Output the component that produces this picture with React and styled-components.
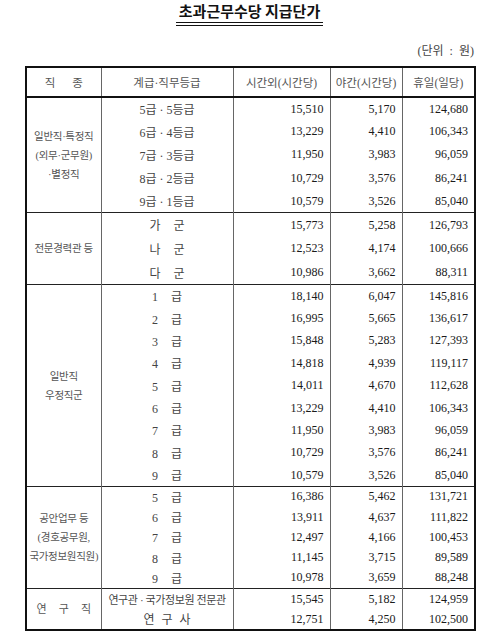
import React from "react";
import styled, { createGlobalStyle } from "styled-components";

const GlobalStyle = createGlobalStyle`
  html, body {
    margin: 0;
    padding: 0;
    background: #ffffff;
  }
  body {
    font-family: "Liberation Serif", "Noto Sans CJK KR", serif;
    color: #222;
  }
`;

const groups = [
  {
    label: ["일반직·특정직", "(외무·군무원)", "·별정직"],
    h: 23.2,
    rows: [
      ["5급 · 5등급", "15,510", "5,170", "124,680"],
      ["6급 · 4등급", "13,229", "4,410", "106,343"],
      ["7급 · 3등급", "11,950", "3,983", "96,059"],
      ["8급 · 2등급", "10,729", "3,576", "86,241"],
      ["9급 · 1등급", "10,579", "3,526", "85,040"],
    ],
  },
  {
    label: ["전문경력관 등"],
    h: 24,
    gap: 10,
    rows: [
      ["가 군", "15,773", "5,258", "126,793"],
      ["나 군", "12,523", "4,174", "100,666"],
      ["다 군", "10,986", "3,662", "88,311"],
    ],
  },
  {
    label: ["일반직", "우정직군"],
    h: 22.4,
    gap: 10,
    rows: [
      ["1 급", "18,140", "6,047", "145,816"],
      ["2 급", "16,995", "5,665", "136,617"],
      ["3 급", "15,848", "5,283", "127,393"],
      ["4 급", "14,818", "4,939", "119,117"],
      ["5 급", "14,011", "4,670", "112,628"],
      ["6 급", "13,229", "4,410", "106,343"],
      ["7 급", "11,950", "3,983", "96,059"],
      ["8 급", "10,729", "3,576", "86,241"],
      ["9 급", "10,579", "3,526", "85,040"],
    ],
  },
  {
    label: ["공안업무 등", "(경호공무원,", "국가정보원직원)"],
    h: 20.4,
    gap: 10,
    rows: [
      ["5 급", "16,386", "5,462", "131,721"],
      ["6 급", "13,911", "4,637", "111,822"],
      ["7 급", "12,497", "4,166", "100,453"],
      ["8 급", "11,145", "3,715", "89,589"],
      ["9 급", "10,978", "3,659", "88,248"],
    ],
  },
  {
    label: ["연 구 직"],
    labelSpaced: true,
    h: 21,
    rows: [
      ["연구관 · 국가정보원 전문관", "15,545", "5,182", "124,959", "small"],
      ["연 구 사", "12,751", "4,250", "102,500", "spaced"],
    ],
  },
];

const App = () => {
  return (
    <Page>
      <GlobalStyle />
      <TitleWrap>
        <Title>초과근무수당 지급단가</Title>
      </TitleWrap>
      <Unit>(단위 : 원)</Unit>
      <Table>
        <colgroup>
          <col style={{ width: 75 }} />
          <col style={{ width: 132 }} />
          <col style={{ width: 97 }} />
          <col style={{ width: 72 }} />
          <col style={{ width: 73 }} />
        </colgroup>
        <thead>
          <tr>
            <HeadCell $wide>직 종</HeadCell>
            <HeadCell>계급·직무등급</HeadCell>
            <HeadCell>시간외(시간당)</HeadCell>
            <HeadCell>야간(시간당)</HeadCell>
            <HeadCell>휴일(일당)</HeadCell>
          </tr>
        </thead>
        <tbody>
          {groups.map((g, gi) =>
            g.rows.map((r, ri) => (
              <Row key={`${gi}-${ri}`} $h={g.h}>
                {ri === 0 && (
                  <GroupCell rowSpan={g.rows.length} $spaced={g.labelSpaced}>
                    {g.label.map((line) => (
                      <div key={line}>{line}</div>
                    ))}
                  </GroupCell>
                )}
                <GradeCell
                  $first={ri === 0}
                  $gap={r[4] === "spaced" ? 4 : g.gap || 0}
                  $small={r[4] === "small"}
                >
                  {r[0]}
                </GradeCell>
                <NumCell $first={ri === 0}>{r[1]}</NumCell>
                <NumCell $first={ri === 0}>{r[2]}</NumCell>
                <NumCell $first={ri === 0}>{r[3]}</NumCell>
              </Row>
            ))
          )}
        </tbody>
      </Table>
    </Page>
  );
};

export default App;

const Page = styled.div`
  width: 449px;
  margin-left: 25px;
  padding-top: 0;
`;

const TitleWrap = styled.div`
  text-align: center;
`;

const Title = styled.h1`
  display: inline-block;
  margin: 0;
  padding: 0 3px 1px;
  font-family: "Noto Sans CJK KR", sans-serif;
  font-size: 15px;
  font-weight: 700;
  line-height: 21px;
  color: #111;
  border-bottom: 4px double #111;
`;

const Unit = styled.div`
  margin-top: 18px;
  text-align: right;
  font-size: 12px;
  line-height: 14px;
  word-spacing: 3px;
  color: #444;
`;

const Table = styled.table`
  margin-top: 8px;
  width: 449px;
  table-layout: fixed;
  border-collapse: collapse;
  border: 2px solid #111;
`;

const HeadCell = styled.th`
  height: 28px;
  padding: 0;
  font-size: 11.5px;
  font-weight: 400;
  color: #555;
  text-align: center;
  border-left: 1px solid #666;
  border-bottom: 2px solid #111;
  word-spacing: ${(p) => (p.$wide ? "14px" : "normal")};
  white-space: nowrap;
`;

const Row = styled.tr`
  height: ${(p) => p.$h}px;
`;

const GroupCell = styled.td`
  padding: 0;
  font-size: ${(p) => (p.$spaced ? "11px" : "10.5px")};
  line-height: 19px;
  color: #555;
  text-align: center;
  white-space: nowrap;
  letter-spacing: -0.3px;
  word-spacing: ${(p) => (p.$spaced ? "10px" : "normal")};
  border-top: 1px solid #222;
`;

const GradeCell = styled.td`
  padding: 0;
  font-size: ${(p) => (p.$small ? "11px" : "12px")};
  letter-spacing: ${(p) => (p.$small ? "-0.4px" : "0")};
  word-spacing: ${(p) => p.$gap}px;
  color: #444;
  text-align: center;
  white-space: nowrap;
  border-left: 1px solid #666;
  border-top: ${(p) => (p.$first ? "1px solid #222" : "none")};
`;

const NumCell = styled.td`
  padding: 0 6px 0 0;
  font-size: 12px;
  color: #1a1a1a;
  text-align: right;
  white-space: nowrap;
  border-left: 1px solid #666;
  border-top: ${(p) => (p.$first ? "1px solid #222" : "none")};
`;
